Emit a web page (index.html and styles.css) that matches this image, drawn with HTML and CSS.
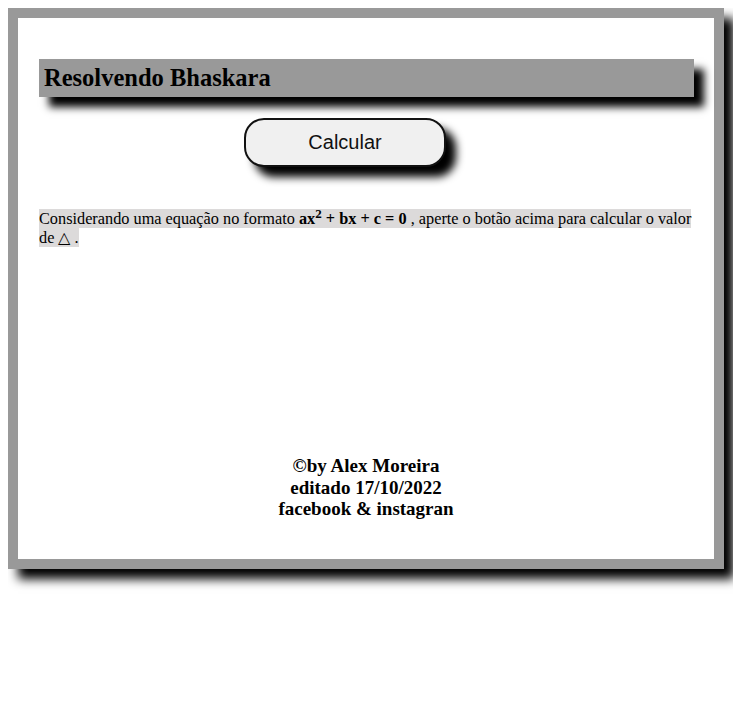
FILE: index.html
```html
<!DOCTYPE html>
<html lang="pt-BR">
<head>
<meta charset="utf-8">
<title>Resolvendo Bhaskara</title>
<link rel="stylesheet" href="styles.css">
</head>
<body>
<div class="page">
<div class="frame">
  <h2 class="title">Resolvendo Bhaskara</h2>
  <div class="actions">
    <button class="calc" type="button">Calcular</button>
  </div>
  <p class="intro"><span class="hl">Considerando uma equação no formato <b>ax<sup>2</sup> + bx + c = 0</b> , aperte o botão acima para calcular o valor de &#9651; .</span></p>
  <div class="credits">
    <div>&copy;by Alex Moreira</div>
    <div>editado 17/10/2022</div>
    <div>facebook &amp; instagran</div>
  </div>
</div>
</div>
</body>
</html>
```

FILE: styles.css
```css
html {
  background: #ffffff;
}
body {
  margin: 8px 0 8px 8px;
  font-family: "Liberation Serif", "Times New Roman", serif;
  color: #000;
}
.page {
  min-height: 692px;
}
.frame {
  height: 501px;
  margin-right: 9px;
  border: 10px solid #999999;
  background: #ffffff;
  padding: 20px;
  box-shadow: 10px 10px 10px #000;
}
.title {
  margin: 21px 0 21px 1px;
  width: 645px;
  padding: 5px;
  background: #999999;
  font-size: 24.5px;
  font-weight: bold;
  line-height: 28px;
  box-shadow: 10px 10px 8px #000;
}
.actions {
  display: flex;
  padding-left: 206px;
}
.calc {
  width: 202px;
  height: 49px;
  border: 2px solid #111;
  border-radius: 20px;
  background: #f0f0f0;
  font-family: "Liberation Sans", Arial, sans-serif;
  font-size: 20px;
  color: #111;
  padding: 0;
  box-shadow: 10px 10px 8px #000;
}
.intro {
  margin: 42px 0 0 1px;
  font-size: 16.3px;
  line-height: 19px;
}
.hl {
  background: #dcdada;
}
.intro sup {
  font-size: 13px;
  line-height: 0;
}
.credits {
  margin-top: 208px;
  text-align: center;
  font-weight: bold;
  font-size: 19px;
  line-height: 21.5px;
}
```
